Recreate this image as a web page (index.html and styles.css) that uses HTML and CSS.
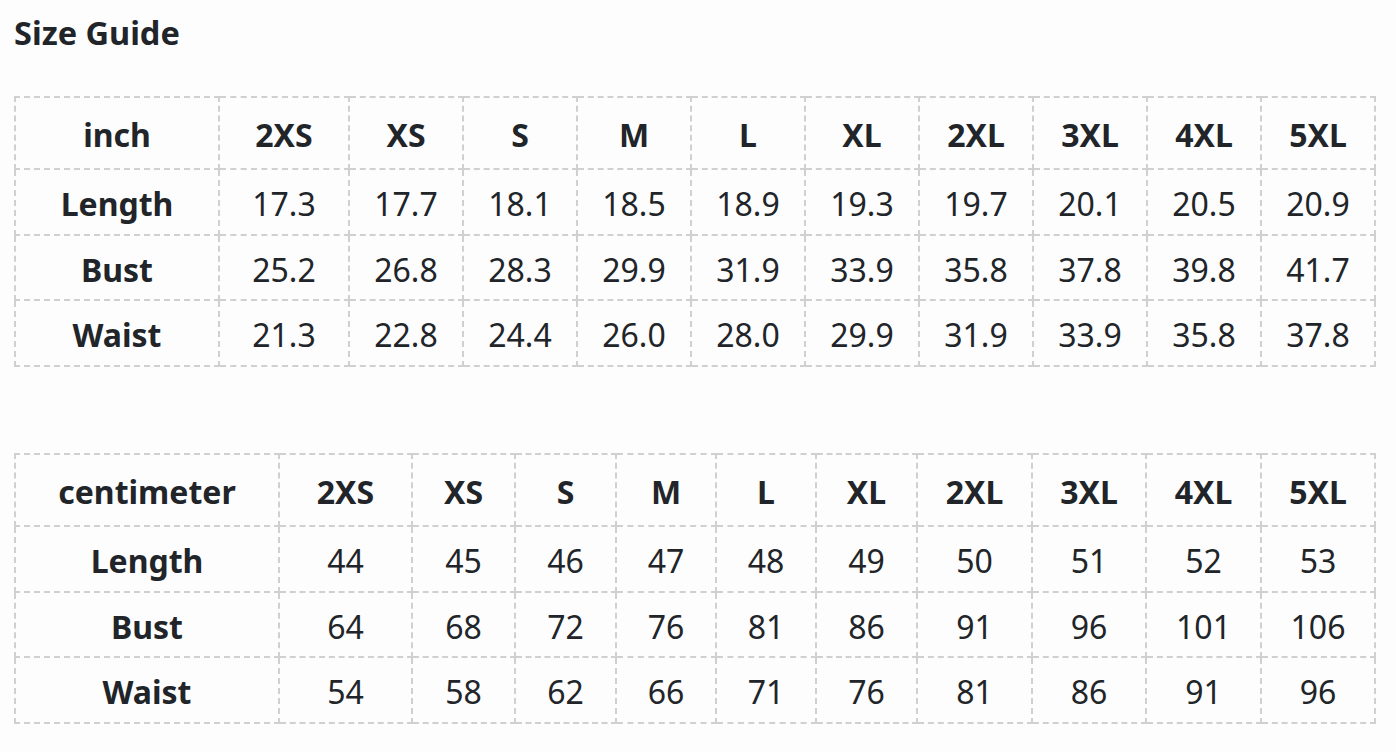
FILE: index.html
```html
<!DOCTYPE html>
<html lang="en">
<head>
<meta charset="utf-8">
<title>Size Guide</title>
<link rel="stylesheet" href="styles.css">
</head>
<body>
<div class="page">
  <h2 class="title">Size Guide</h2>
  <table class="size-table t-inch">
    <colgroup>
      <col class="c0"><col class="c1"><col class="c2"><col class="c3"><col class="c4"><col class="c5"><col class="c6"><col class="c7"><col class="c8"><col class="c9"><col class="c10">
    </colgroup>
    <tr class="head"><th>inch</th><th>2XS</th><th>XS</th><th>S</th><th>M</th><th>L</th><th>XL</th><th>2XL</th><th>3XL</th><th>4XL</th><th>5XL</th></tr>
    <tr><th>Length</th><td>17.3</td><td>17.7</td><td>18.1</td><td>18.5</td><td>18.9</td><td>19.3</td><td>19.7</td><td>20.1</td><td>20.5</td><td>20.9</td></tr>
    <tr class="mid"><th>Bust</th><td>25.2</td><td>26.8</td><td>28.3</td><td>29.9</td><td>31.9</td><td>33.9</td><td>35.8</td><td>37.8</td><td>39.8</td><td>41.7</td></tr>
    <tr><th>Waist</th><td>21.3</td><td>22.8</td><td>24.4</td><td>26.0</td><td>28.0</td><td>29.9</td><td>31.9</td><td>33.9</td><td>35.8</td><td>37.8</td></tr>
  </table>
  <table class="size-table t-cm">
    <colgroup>
      <col class="c0"><col class="c1"><col class="c2"><col class="c3"><col class="c4"><col class="c5"><col class="c6"><col class="c7"><col class="c8"><col class="c9"><col class="c10">
    </colgroup>
    <tr class="head"><th>centimeter</th><th>2XS</th><th>XS</th><th>S</th><th>M</th><th>L</th><th>XL</th><th>2XL</th><th>3XL</th><th>4XL</th><th>5XL</th></tr>
    <tr><th>Length</th><td>44</td><td>45</td><td>46</td><td>47</td><td>48</td><td>49</td><td>50</td><td>51</td><td>52</td><td>53</td></tr>
    <tr class="mid"><th>Bust</th><td>64</td><td>68</td><td>72</td><td>76</td><td>81</td><td>86</td><td>91</td><td>96</td><td>101</td><td>106</td></tr>
    <tr><th>Waist</th><td>54</td><td>58</td><td>62</td><td>66</td><td>71</td><td>76</td><td>81</td><td>86</td><td>91</td><td>96</td></tr>
  </table>
</div>
</body>
</html>
```

FILE: styles.css
```css
html, body {
  margin: 0;
  padding: 0;
  background: #fdfdfd;
}
body {
  font-family: "Noto Sans", "Open Sans", sans-serif;
  color: #212529;
}
.page {
  padding: 0 0 0 14px;
  width: 1364px;
}
.title {
  margin: 0;
  padding-top: 9px;
  font-size: 32.5px;
  line-height: 48px;
  font-weight: 700;
  height: 49px;
}
.size-table {
  border-collapse: collapse;
  table-layout: fixed;
  width: 1362px;
  font-size: 32px;
}
.t-inch { margin-top: 38px; }
.t-cm { margin-top: 86px; }
.size-table th, .size-table td {
  border: 2px dashed #d0d0d0;
  text-align: center;
  padding: 4px 0 0;
  line-height: 40px;
}
.size-table th { font-weight: 700; }
.size-table td { font-weight: 400; }
.size-table tr { height: 66px; }
.size-table tr.head { height: 72px; }
.size-table tr.mid { height: 65px; }

.t-inch .c0 { width: 204px; }
.t-inch .c1 { width: 130px; }
.t-inch .c2, .t-inch .c3, .t-inch .c4, .t-inch .c5, .t-inch .c6,
.t-inch .c7, .t-inch .c8, .t-inch .c9 { width: 114px; }
.t-inch .c10 { width: 114px; }

.t-cm .c0 { width: 264px; }
.t-cm .c1 { width: 133px; }
.t-cm .c2 { width: 103px; }
.t-cm .c3 { width: 101px; }
.t-cm .c4 { width: 100px; }
.t-cm .c5 { width: 100px; }
.t-cm .c6 { width: 101px; }
.t-cm .c7 { width: 115px; }
.t-cm .c8 { width: 114px; }
.t-cm .c9 { width: 115px; }
.t-cm .c10 { width: 114px; }
```
